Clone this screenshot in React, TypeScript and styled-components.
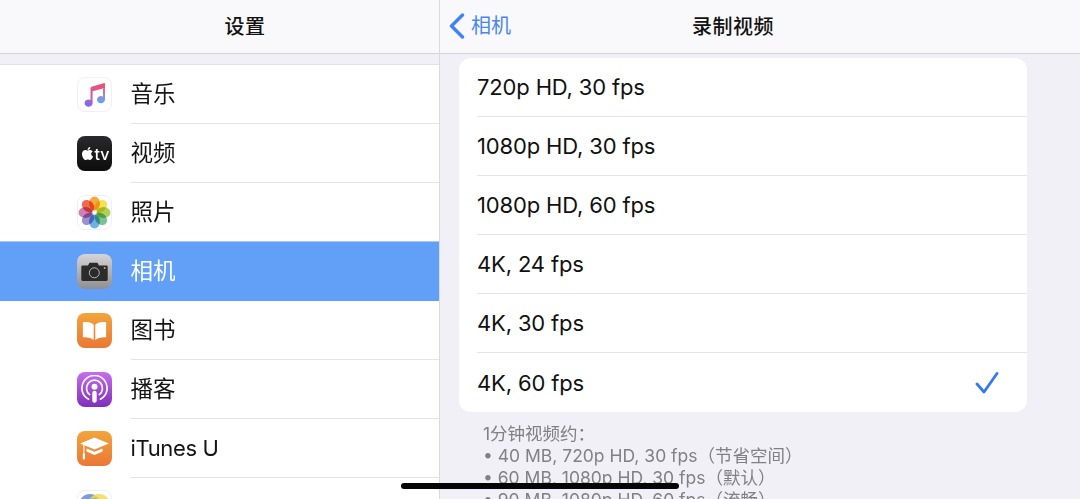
import React from "react";
import styled, { createGlobalStyle } from "styled-components";
import { FaApple } from "react-icons/fa";

const Global = createGlobalStyle`
  html, body { margin: 0; padding: 0; background: #f0f0f6; }
  #root { width: 1080px; height: 499px; overflow: hidden; }
  * { box-sizing: border-box; }
`;

const FONT = `Inter, "Noto Sans CJK SC", sans-serif`;

const Screen = styled.div`
  position: relative;
  display: flex;
  width: 1080px;
  height: 499px;
  overflow: hidden;
  font-family: ${FONT};
  color: #111;
`;

const Pane = styled.section<{ $w?: number }>`
  display: flex;
  flex-direction: column;
  ${(p) => (p.$w ? `width: ${p.$w}px; flex: none; border-right: 1px solid #d9d9de;` : "flex: 1;")}
  height: 499px;
  overflow: hidden;
  background: #f0f0f6;
`;

const NavBar = styled.header<{ $pl?: number; $pr?: number }>`
  flex: none;
  position: relative;
  display: flex;
  align-items: center;
  justify-content: center;
  height: 54px;
  padding: 0 ${(p) => p.$pr ?? 0}px 0 ${(p) => p.$pl ?? 0}px;
  background: #f9f9fb;
  border-bottom: 1px solid #d4d4d8;
`;

const NavTitle = styled.h1`
  margin: 0;
  font-size: 20px;
  font-weight: 500;
  line-height: 28px;
  letter-spacing: 0.5px;
  color: #111;
`;

const Back = styled.div`
  position: absolute;
  left: 9px;
  top: 11px;
  display: flex;
  align-items: center;
  gap: 6px;
  font-size: 20px;
  line-height: 30px;
  color: #4a86f0;
`;

const SideList = styled.ul`
  list-style: none;
  margin: 10px 0 0;
  padding: 0;
  background: #fff;
  border-top: 1px solid #e2e2e6;
`;

const SideRow = styled.li<{ $active?: boolean }>`
  display: flex;
  align-items: center;
  height: 59px;
  padding-left: 77px;
  gap: 18.5px;
  background: ${(p) => (p.$active ? "#62a0f8" : "transparent")};
  box-shadow: ${(p) => (p.$active ? "0 -1px 0 #a6c8fa" : "none")};
  color: ${(p) => (p.$active ? "#fff" : "#151515")};
  font-size: 22.5px;
`;

const SideLabel = styled.div<{ $line?: boolean; $latin?: boolean }>`
  flex: 1;
  height: 100%;
  display: flex;
  align-items: center;
  border-bottom: 1px solid ${(p) => (p.$line ? "#e4e4e6" : "transparent")};
  padding-bottom: ${(p) => (p.$latin ? 0 : 4)}px;
  ${(p) => (p.$latin ? "font-size: 22px; letter-spacing: -0.35px;" : "")}
`;

const AppIcon = styled.span<{ $bg: string; $ring?: boolean }>`
  flex: none;
  display: flex;
  align-items: center;
  justify-content: center;
  width: 35px;
  height: 35px;
  border-radius: 8px;
  background: ${(p) => p.$bg};
  border: ${(p) => (p.$ring ? "1px solid #f0f0f2" : "none")};
  overflow: hidden;
`;

const TvMark = styled.span`
  display: flex;
  align-items: center;
  color: #fff;
  font-size: 16px;
  font-weight: 500;
  line-height: 1;
`;

const Content = styled.div`
  padding: 4px 53px 0 19px;
`;

const Card = styled.ul`
  list-style: none;
  margin: 0;
  padding: 0 0 0 18px;
  background: #fff;
  border-radius: 12px;
`;

const OptionRow = styled.li<{ $last?: boolean }>`
  display: flex;
  align-items: center;
  justify-content: space-between;
  height: 59px;
  padding-right: 28px;
  font-size: 22px;
  letter-spacing: -0.15px;
  color: #111;
  border-bottom: ${(p) => (p.$last ? "none" : "1px solid #e4e4e6")};
`;

const Note = styled.div`
  margin: 11px 0 0;
  padding-left: 24px;
  font-size: 17.5px;
  line-height: 22px;
  color: #808085;
`;

const HomeBar = styled.div`
  position: absolute;
  left: 401px;
  top: 483px;
  width: 278px;
  height: 6px;
  border-radius: 3px;
  background: #060606;
`;

const Petal = styled.ellipse`
  mix-blend-mode: multiply;
`;

const MusicIcon = () => (
  <svg width="23" height="25" viewBox="0 0 23 25">
    <defs>
      <linearGradient id="mus" x1="0.5" y1="0" x2="0.3" y2="1">
        <stop offset="0" stopColor="#f2506a" />
        <stop offset="0.55" stopColor="#c95fb4" />
        <stop offset="1" stopColor="#7c68f6" />
      </linearGradient>
      <linearGradient id="mus2" x1="0" y1="0" x2="0" y2="1">
        <stop offset="0" stopColor="#ea5f88" />
        <stop offset="0.5" stopColor="#9b8ad0" />
        <stop offset="1" stopColor="#55aaf6" />
      </linearGradient>
    </defs>
    <path d="M7.5 6 Q7.5 5 8.5 4.7 L20.5 1.2 Q22 .8 22 2 L22 6 L9.6 9.2 L9.6 21 A4 3.6 0 1 1 7.5 18 Z" fill="url(#mus)" />
    <path d="M20 6.5 L22 6 L22 17.5 A4 3.6 0 1 1 20 14.5 Z" fill="url(#mus2)" />
  </svg>
);

const PhotosIcon = () => {
  const cols = ["#f5a93e", "#f8e04e", "#aed05a", "#78c296", "#6cb2e4", "#9c90d0", "#d080b0", "#ee6a52"];
  return (
    <svg width="33" height="33" viewBox="-16.5 -16.5 33 33">
      {cols.map((c, i) => (
        <Petal key={c} cx="0" cy="-9" rx="5.4" ry="7" fill={c} transform={`rotate(${i * 45})`} />
      ))}
    </svg>
  );
};

const CameraIcon = () => (
  <svg width="27" height="20" viewBox="0 0 27 20">
    <path d="M1.5 3.5 H7 L8.5 .8 H16.5 L18 3.5 H25.5 A1.2 1.2 0 0 1 26.7 4.7 V17.5 A1.6 1.6 0 0 1 25 19 H2 A1.6 1.6 0 0 1 .3 17.5 V4.7 A1.2 1.2 0 0 1 1.5 3.5 Z" fill="#2b2b2c" />
    <circle cx="13.3" cy="10.8" r="5" fill="none" stroke="#b5b5b5" strokeWidth="1" />
    <circle cx="23.7" cy="6" r="1" fill="#e9a93c" />
  </svg>
);

const BookIcon = () => (
  <svg width="25" height="20" viewBox="0 0 27 22">
    <path d="M12.6 4 C10.5 1.5 6 .7 1.6 1.2 A1 1 0 0 0 .7 2.2 V18 C5 17.4 9.5 18.2 12.6 20.8 Z" fill="#fff" />
    <path d="M14.4 4 C16.5 1.5 21 .7 25.4 1.2 A1 1 0 0 1 26.3 2.2 V18 C22 17.4 17.5 18.2 14.4 20.8 Z" fill="#fff" />
  </svg>
);

const PodcastIcon = () => (
  <svg width="29" height="29" viewBox="0 0 29 29" fill="none" stroke="#fff" strokeLinecap="round">
    <path d="M8.6 24.2 A12.6 12.6 0 1 1 20.4 24.2" strokeWidth="1.7" />
    <path d="M9.7 19.6 A8 8 0 1 1 19.3 19.6" strokeWidth="1.7" />
    <circle cx="14.5" cy="11.8" r="3" fill="#fff" stroke="none" />
    <rect x="12.3" y="15.8" width="4.4" height="12" rx="2.2" fill="#fff" stroke="none" />
  </svg>
);

const CapIcon = () => (
  <svg width="29" height="23" viewBox="0 0 29 23" fill="#fff">
    <path d="M14.5 .5 L28.8 6.5 L14.5 12.5 L.2 6.5 Z" />
    <path d="M6.5 11.5 L14.5 14.8 L22.5 11.5 V14.5 L14.5 18 L6.5 14.5 Z" />
    <rect x="3.3" y="8" width="1.1" height="9" />
    <rect x="2.8" y="16" width="2.2" height="6.5" rx="1" />
  </svg>
);

const CheckIcon = () => (
  <svg width="24" height="22" viewBox="0 0 24 22" fill="none" stroke="#3478f6" strokeWidth="2.8" strokeLinecap="round" strokeLinejoin="round">
    <path d="M2 12 L9 20 L22 1.5" />
  </svg>
);

const BackChevron = () => (
  <svg width="16" height="26" viewBox="0 0 16 26" fill="none" stroke="#3f83f6" strokeWidth="3.4" strokeLinecap="round" strokeLinejoin="round">
    <path d="M13.5 2 L2.5 13 L13.5 24" />
  </svg>
);

const GlobeIcon = () => (
  <svg width="33" height="33" viewBox="0 0 33 33">
    <circle cx="12" cy="14" r="11" fill="#7a9be0" />
    <circle cx="21" cy="14" r="11" fill="#f2d94e" fillOpacity="0.85" />
    <circle cx="16.5" cy="13" r="6" fill="#8fbf6a" />
  </svg>
);

const side = [
  { label: "音乐", bg: "#fff", ring: true, icon: <MusicIcon />, line: true },
  { label: "视频", bg: "linear-gradient(#2a2a2c,#0c0c0c)", icon: <TvMark><FaApple size={15} />tv</TvMark>, line: true },
  { label: "照片", bg: "#fff", ring: true, icon: <PhotosIcon /> },
  { label: "相机", bg: "linear-gradient(#d5d5d7,#8f8f93)", icon: <CameraIcon />, active: true },
  { label: "图书", bg: "linear-gradient(#f2a53c,#ea7736)", icon: <BookIcon />, line: true },
  { label: "播客", bg: "linear-gradient(#c66ef0,#7f2fb8)", icon: <PodcastIcon />, line: true },
  { label: "iTunes U", bg: "linear-gradient(#f2a53c,#ea7736)", icon: <CapIcon />, line: true, latin: true },
  { label: "", bg: "#fff", ring: true, icon: <GlobeIcon /> },
];

const options = [
  "720p HD, 30 fps",
  "1080p HD, 30 fps",
  "1080p HD, 60 fps",
  "4K, 24 fps",
  "4K, 30 fps",
  "4K, 60 fps",
];

const notes = [
  "1分钟视频约：",
  "• 40 MB, 720p HD, 30 fps（节省空间）",
  "• 60 MB, 1080p HD, 30 fps（默认）",
  "• 90 MB, 1080p HD, 60 fps（流畅）",
];

export default function App() {
  return (
    <Screen>
      <Global />
      <Pane $w={440}>
        <NavBar $pl={51}>
          <NavTitle>设置</NavTitle>
        </NavBar>
        <SideList>
          {side.map((r) => (
            <SideRow key={r.label || "more"} $active={r.active}>
              <AppIcon $bg={r.bg} $ring={r.ring}>{r.icon}</AppIcon>
              <SideLabel $line={r.line} $latin={r.latin}>{r.label}</SideLabel>
            </SideRow>
          ))}
        </SideList>
      </Pane>
      <Pane>
        <NavBar $pr={54}>
          <Back>
            <BackChevron />
            相机
          </Back>
          <NavTitle>录制视频</NavTitle>
        </NavBar>
        <Content>
          <Card>
            {options.map((o, i) => (
              <OptionRow key={o} $last={i === options.length - 1}>
                {o}
                {i === options.length - 1 && <CheckIcon />}
              </OptionRow>
            ))}
          </Card>
          <Note>
            {notes.map((n) => (
              <div key={n}>{n}</div>
            ))}
          </Note>
        </Content>
      </Pane>
      <HomeBar />
    </Screen>
  );
}
